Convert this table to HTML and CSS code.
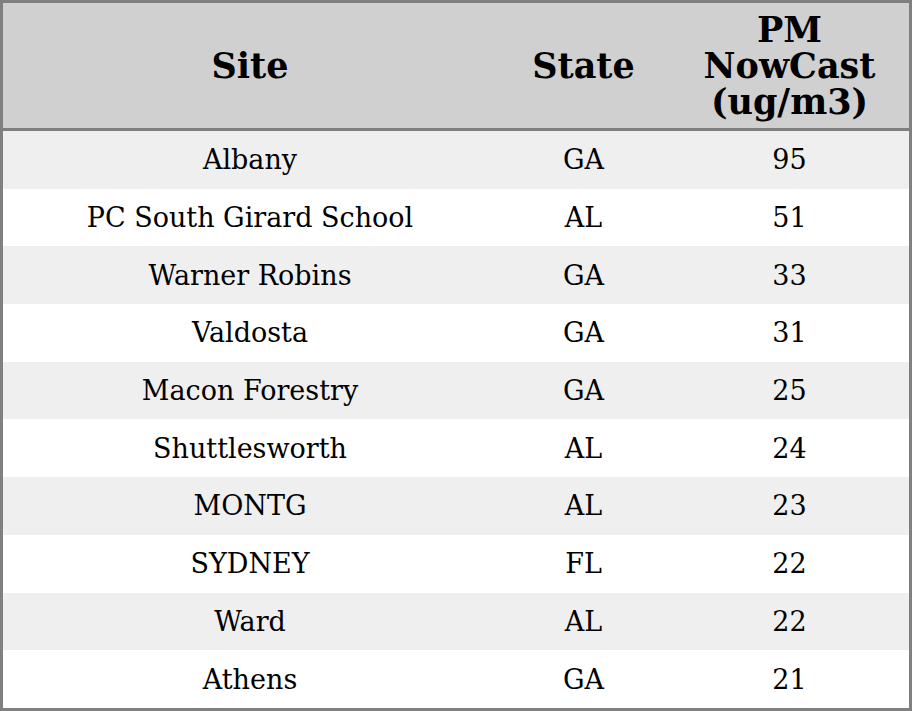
FILE: index.html
```html
<!DOCTYPE html>
<html>
<head>
<meta charset="utf-8">
<link rel="stylesheet" href="styles.css">
</head>
<body>
<table class="aq">
<colgroup><col class="c-site"><col class="c-state"><col class="c-pm"></colgroup>
<thead>
<tr><th>Site</th><th>State</th><th>PM<br>NowCast<br>(ug/m3)</th></tr>
</thead>
<tbody>
<tr class="odd"><td>Albany</td><td>GA</td><td>95</td></tr>
<tr><td>PC South Girard School</td><td>AL</td><td>51</td></tr>
<tr class="odd"><td>Warner Robins</td><td>GA</td><td>33</td></tr>
<tr><td>Valdosta</td><td>GA</td><td>31</td></tr>
<tr class="odd"><td>Macon Forestry</td><td>GA</td><td>25</td></tr>
<tr><td>Shuttlesworth</td><td>AL</td><td>24</td></tr>
<tr class="odd"><td>MONTG</td><td>AL</td><td>23</td></tr>
<tr><td>SYDNEY</td><td>FL</td><td>22</td></tr>
<tr class="odd"><td>Ward</td><td>AL</td><td>22</td></tr>
<tr><td>Athens</td><td>GA</td><td>21</td></tr>
</tbody>
</table>
</body>
</html>
```
FILE: styles.css
```css
html, body { margin: 0; padding: 0; background: #fff; }
.aq {
  width: 912px;
  height: 711px;
  border-collapse: separate;
  border-spacing: 0;
  border: 3px solid #808080;
  table-layout: fixed;
  font-family: "DejaVu Serif", serif;
  color: #000;
  box-sizing: border-box;
}
.c-site { width: 494px; }
.c-state { width: 173px; }
.c-pm { width: 239px; }
.aq th {
  background: #d0d0d0;
  font-size: 35px;
  font-weight: bold;
  line-height: 36px;
  height: 128px;
  padding: 0;
  border-bottom: 3px solid #808080;
  text-align: center;
  vertical-align: middle;
  box-sizing: border-box;
}
.aq td {
  font-size: 27px;
  text-align: center;
  vertical-align: middle;
  padding: 0;
  height: 56px;
}
.aq tr.odd td { background: #efefef; }
```
